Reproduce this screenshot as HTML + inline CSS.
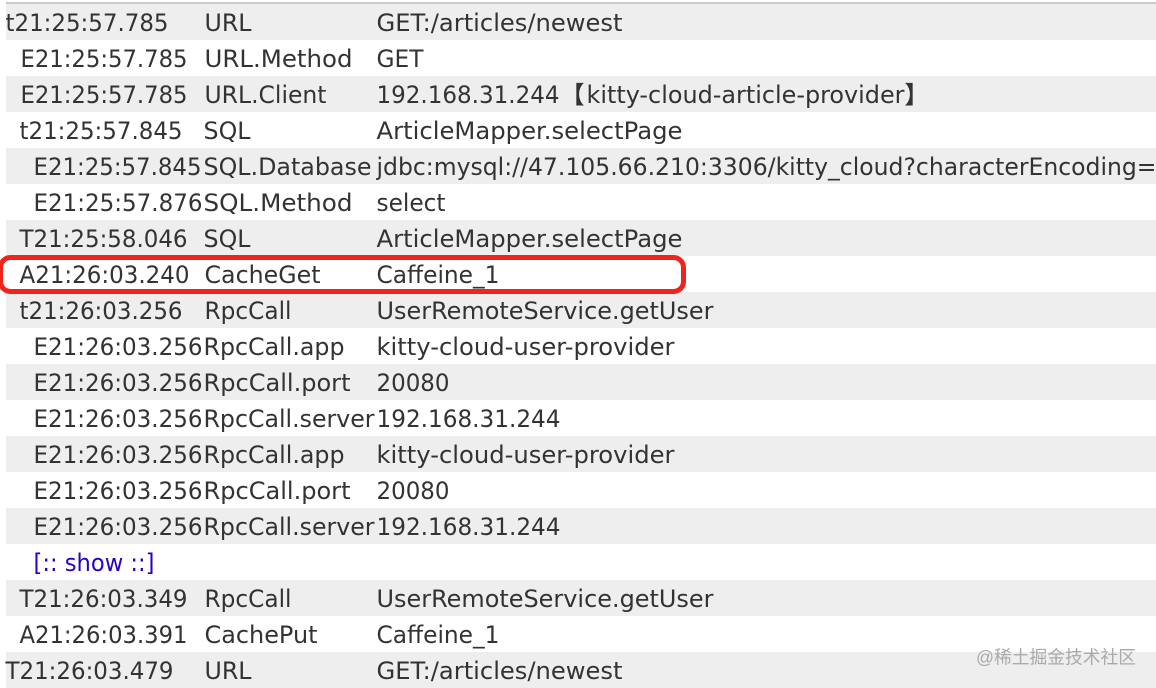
<!DOCTYPE html>
<html><head><meta charset="utf-8"><style>
html,body{margin:0;padding:0;background:#fff;width:1156px;height:688px;overflow:hidden}
svg{display:block}
text{font-family:"DejaVu Sans","Noto Sans CJK SC",sans-serif;font-size:24.3px;fill:#333}
.c{font-family:"Noto Sans CJK SC",sans-serif;font-size:24px;font-weight:700}
.w{font-family:"Liberation Sans","Noto Sans CJK SC",sans-serif;font-size:18px;fill:#aaa}
</style></head><body>
<svg width="1156" height="688" viewBox="0 0 1156 688" xmlns="http://www.w3.org/2000/svg">
<rect x="6" y="2" width="1150" height="2" fill="#ccc"/>
<g fill="#eee">
<rect x="6" y="4" width="1150" height="36"/><rect x="6" y="76" width="1150" height="36"/><rect x="6" y="148" width="1150" height="36"/><rect x="6" y="220" width="1150" height="36"/><rect x="6" y="292" width="1150" height="36"/><rect x="6" y="364" width="1150" height="36"/><rect x="6" y="436" width="1150" height="36"/><rect x="6" y="508" width="1150" height="36"/><rect x="6" y="580" width="1150" height="36"/><rect x="6" y="652" width="1150" height="36"/>
</g>
<g transform="translate(-0.5,-1)" style="filter:blur(0.25px)">
<text x="6" y="32" textLength="163" lengthAdjust="spacingAndGlyphs">t21:25:57.785</text><text x="205" y="32" textLength="47" lengthAdjust="spacingAndGlyphs">URL</text><text x="377" y="32" textLength="246" lengthAdjust="spacingAndGlyphs">GET:/articles/newest</text>
<text x="21" y="68" textLength="167" lengthAdjust="spacingAndGlyphs">E21:25:57.785</text><text x="205" y="68" textLength="148" lengthAdjust="spacingAndGlyphs">URL.Method</text><text x="377" y="68" textLength="47" lengthAdjust="spacingAndGlyphs">GET</text>
<text x="21" y="104" textLength="167" lengthAdjust="spacingAndGlyphs">E21:25:57.785</text><text x="205" y="104" textLength="122" lengthAdjust="spacingAndGlyphs">URL.Client</text><text x="377" y="104" textLength="183" lengthAdjust="spacingAndGlyphs">192.168.31.244</text><text class="c" x="561" y="104">【</text><text x="587" y="104" textLength="318" lengthAdjust="spacingAndGlyphs">kitty-cloud-article-provider</text><text class="c" x="905" y="104">】</text>
<text x="20" y="140" textLength="163" lengthAdjust="spacingAndGlyphs">t21:25:57.845</text><text x="204" y="140" textLength="47" lengthAdjust="spacingAndGlyphs">SQL</text><text x="377" y="140" textLength="306" lengthAdjust="spacingAndGlyphs">ArticleMapper.selectPage</text>
<text x="34" y="176" textLength="168" lengthAdjust="spacingAndGlyphs">E21:25:57.845</text><text x="204" y="176" textLength="168" lengthAdjust="spacingAndGlyphs">SQL.Database</text><text x="377" y="176" textLength="780" lengthAdjust="spacingAndGlyphs">jdbc:mysql://47.105.66.210:3306/kitty_cloud?characterEncoding=</text>
<text x="34" y="212" textLength="169" lengthAdjust="spacingAndGlyphs">E21:25:57.876</text><text x="204" y="212" textLength="149" lengthAdjust="spacingAndGlyphs">SQL.Method</text><text x="377" y="212" textLength="69" lengthAdjust="spacingAndGlyphs">select</text>
<text x="20" y="248" textLength="168" lengthAdjust="spacingAndGlyphs">T21:25:58.046</text><text x="204" y="248" textLength="47" lengthAdjust="spacingAndGlyphs">SQL</text><text x="377" y="248" textLength="306" lengthAdjust="spacingAndGlyphs">ArticleMapper.selectPage</text>
<text x="20" y="284" textLength="170" lengthAdjust="spacingAndGlyphs">A21:26:03.240</text><text x="205" y="284" textLength="116" lengthAdjust="spacingAndGlyphs">CacheGet</text><text x="377" y="284" textLength="123" lengthAdjust="spacingAndGlyphs">Caffeine_1</text>
<text x="20" y="320" textLength="163" lengthAdjust="spacingAndGlyphs">t21:26:03.256</text><text x="205" y="320" textLength="87" lengthAdjust="spacingAndGlyphs">RpcCall</text><text x="377" y="320" textLength="337" lengthAdjust="spacingAndGlyphs">UserRemoteService.getUser</text>
<text x="34" y="356" textLength="169" lengthAdjust="spacingAndGlyphs">E21:26:03.256</text><text x="204" y="356" textLength="141" lengthAdjust="spacingAndGlyphs">RpcCall.app</text><text x="377" y="356" textLength="298" lengthAdjust="spacingAndGlyphs">kitty-cloud-user-provider</text>
<text x="34" y="392" textLength="169" lengthAdjust="spacingAndGlyphs">E21:26:03.256</text><text x="204" y="392" textLength="147" lengthAdjust="spacingAndGlyphs">RpcCall.port</text><text x="377" y="392" textLength="73" lengthAdjust="spacingAndGlyphs">20080</text>
<text x="34" y="428" textLength="169" lengthAdjust="spacingAndGlyphs">E21:26:03.256</text><text x="204" y="428" textLength="171" lengthAdjust="spacingAndGlyphs">RpcCall.server</text><text x="377" y="428" textLength="184" lengthAdjust="spacingAndGlyphs">192.168.31.244</text>
<text x="34" y="464" textLength="169" lengthAdjust="spacingAndGlyphs">E21:26:03.256</text><text x="204" y="464" textLength="141" lengthAdjust="spacingAndGlyphs">RpcCall.app</text><text x="377" y="464" textLength="298" lengthAdjust="spacingAndGlyphs">kitty-cloud-user-provider</text>
<text x="34" y="500" textLength="169" lengthAdjust="spacingAndGlyphs">E21:26:03.256</text><text x="204" y="500" textLength="147" lengthAdjust="spacingAndGlyphs">RpcCall.port</text><text x="377" y="500" textLength="73" lengthAdjust="spacingAndGlyphs">20080</text>
<text x="34" y="536" textLength="169" lengthAdjust="spacingAndGlyphs">E21:26:03.256</text><text x="204" y="536" textLength="171" lengthAdjust="spacingAndGlyphs">RpcCall.server</text><text x="377" y="536" textLength="184" lengthAdjust="spacingAndGlyphs">192.168.31.244</text>
<text x="34" y="572" textLength="121" lengthAdjust="spacingAndGlyphs" style="fill:#2a00c8">[:: show ::]</text>
<text x="20" y="608" textLength="168" lengthAdjust="spacingAndGlyphs">T21:26:03.349</text><text x="205" y="608" textLength="87" lengthAdjust="spacingAndGlyphs">RpcCall</text><text x="377" y="608" textLength="337" lengthAdjust="spacingAndGlyphs">UserRemoteService.getUser</text>
<text x="20" y="644" textLength="168" lengthAdjust="spacingAndGlyphs">A21:26:03.391</text><text x="205" y="644" textLength="113" lengthAdjust="spacingAndGlyphs">CachePut</text><text x="377" y="644" textLength="123" lengthAdjust="spacingAndGlyphs">Caffeine_1</text>
<text x="6" y="680" textLength="168" lengthAdjust="spacingAndGlyphs">T21:26:03.479</text><text x="205" y="680" textLength="47" lengthAdjust="spacingAndGlyphs">URL</text><text x="377" y="680" textLength="246" lengthAdjust="spacingAndGlyphs">GET:/articles/newest</text>
</g>
<rect x="0.5" y="257.5" width="683" height="34" rx="10" ry="10" fill="none" stroke="#f0241c" stroke-width="5"/>
<text class="w" x="976" y="663.5" textLength="160" lengthAdjust="spacingAndGlyphs">@稀土掘金技术社区</text>
</svg>
</body></html>
